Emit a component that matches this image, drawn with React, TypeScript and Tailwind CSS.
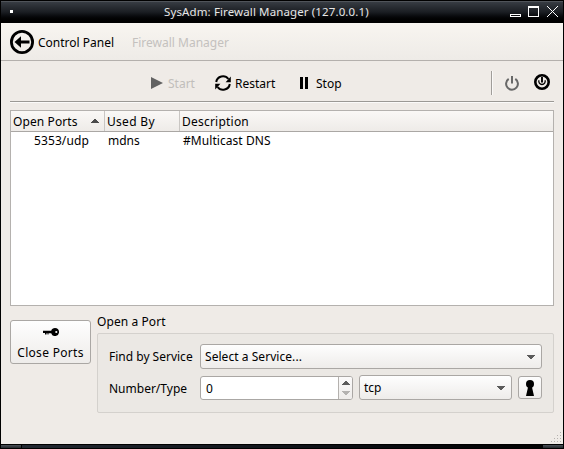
import type { ReactNode } from "react";

function DownArrow({ className = "" }: { className?: string }) {
  return (
    <svg className={className} width="8" height="4" viewBox="0 0 8 4" shapeRendering="crispEdges">
      <path d="M0 0h8v1H0zM1 1h6v1H1zM2 2h4v1H2zM3 3h2v1H3z" fill="currentColor" />
    </svg>
  );
}

function UpArrow({ className = "" }: { className?: string }) {
  return (
    <svg className={className} width="8" height="4" viewBox="0 0 8 4" shapeRendering="crispEdges">
      <path d="M0 3h8v1H0zM1 2h6v1H1zM2 1h4v1H2zM3 0h2v1H3z" fill="currentColor" />
    </svg>
  );
}

function TitleBar() {
  return (
    <div className="h-[23px] border-x border-t border-black bg-linear-to-b from-[#3a3f46] via-[#1b1e23] to-black">
      <div className="flex h-full w-full items-center border-t border-[#50545a] pr-[5px] pb-[2px] pl-[9px]">
        <div className="size-[3px] shrink-0 bg-white" />
        <div className="flex-1 pl-[151px] text-[11.5px] leading-[18px] tracking-[0.12px] whitespace-nowrap text-[#e6e6e6]">
          SysAdm: Firewall Manager (127.0.0.1)
        </div>
        <svg width="48" height="11" viewBox="0 0 48 11" shapeRendering="crispEdges" fill="none" stroke="#fff">
          <path d="M.5 8.5h10v2H.5z" />
          <path d="M18.5.5h10v10h-10zM18 1.5h11" />
          <path d="M37 0l11 11M48 0L37 11" />
        </svg>
      </div>
    </div>
  );
}

function NavBar() {
  return (
    <div className="flex h-[38px] items-center border-b border-[#b4b0ad] bg-linear-to-b from-[#f8f5f0] to-[#eeebe7] pl-[9px]">
      <svg width="24" height="24" viewBox="0 0 24 24" fill="none" stroke="#000">
        <circle cx="12" cy="12" r="10.6" strokeWidth="2.8" />
        <path d="M9 12h10.5" strokeWidth="3" />
        <path d="M4.5 12L11 6.2v11.6z" fill="#000" stroke="none" />
      </svg>
      <span className="mt-[2px] ml-1 w-[94px]">Control Panel</span>
      <span className="mt-[2px] text-[#c4c1be]">Firewall Manager</span>
    </div>
  );
}

function Tool({ icon, label, className = "" }: { icon: ReactNode; label: string; className?: string }) {
  return (
    <div className={`flex items-center ${className}`}>
      {icon}
      <span className="mt-[2px]">{label}</span>
    </div>
  );
}

function Toolbar() {
  return (
    <div className="mx-[9px] flex h-[41px] items-center border-b border-[#9b9995] pt-1 shadow-[0_1px_0_#fbfaf9]">
      <Tool
        className="ml-[141px] w-[64px] text-[#c1bebb]"
        label="Start"
        icon={
          <svg className="mr-[5px]" width="12" height="12" viewBox="0 0 12 12">
            <path d="M0 0l12 6-12 6z" fill="#626262" />
          </svg>
        }
      />
      <Tool
        className="w-[85px]"
        label="Restart"
        icon={
          <svg className="mr-[4px]" width="16" height="16" viewBox="0 0 16 16" fill="none" stroke="#000" strokeWidth="2">
            <path d="M1.2 7A6.8 6.8 0 0 1 13.4 4M14.8 9A6.8 6.8 0 0 1 2.6 12" />
            <path d="M15.8 1.6v5.6h-5.2zM.2 14.4V8.8h5.2z" fill="#000" stroke="none" />
          </svg>
        }
      />
      <Tool
        label="Stop"
        icon={
          <svg className="mr-[8px]" width="8" height="12" viewBox="0 0 8 12">
            <path d="M0 0h3v12H0zM5 0h3v12H5z" />
          </svg>
        }
      />
      <div className="ml-auto h-6 w-[2px] border-l border-[#a09d9a] bg-[#faf9f8]" />
      <svg className="ml-3" width="14" height="15" viewBox="0 0 14 15" fill="none" stroke="#686868" strokeWidth="2">
        <path d="M3.7 2.9a5.9 5.9 0 1 0 6.6 0M7 0v7.5" />
      </svg>
      <svg className="mr-[4px] mb-[2px] ml-[15px]" width="16" height="16" viewBox="0 0 16 16" fill="none" stroke="#000">
        <circle cx="8" cy="8" r="6.7" strokeWidth="2.6" />
        <path d="M8 3v5.4" strokeWidth="1.9" />
        <path d="M5 6.2a3.2 3.2 0 1 0 6 0" strokeWidth="1.3" />
      </svg>
    </div>
  );
}

function PortsTable() {
  return (
    <div className="mx-[9px] mt-[8px] flex h-[196px] flex-col border border-[#b4b1ae] bg-white">
      <div className="flex h-[21px] items-center border-b border-[#aaa7a4] bg-linear-to-b from-[#faf8f6] to-[#eeebe8]">
        <div className="flex h-full w-[94px] items-center justify-between border-r border-[#c9c6c3] pr-[5px] pl-[2px]">
          <span className="mt-px tracking-[0.1px]">Open Ports</span>
          <UpArrow className="text-[#4b4b4b]" />
        </div>
        <div className="flex h-full w-[75px] items-center border-r border-[#c9c6c3] pt-px pl-[2px] tracking-[0.3px]">
          Used By
        </div>
        <div className="pt-px pl-[2px] tracking-[0.22px]">Description</div>
      </div>
      <div className="flex h-[18px] items-center">
        <div className="w-[94px] pr-[16px] text-right tracking-[0.12px]">5353/udp</div>
        <div className="w-[75px] pl-[3px]">mdns</div>
        <div className="pl-[3px] tracking-[0.06px]">#Multicast DNS</div>
      </div>
    </div>
  );
}

const control = "rounded-[3px] border border-[#aaa7a4] bg-linear-to-b from-[#fefefe] to-[#eeecea]";

function OpenPort() {
  return (
    <div className="ml-[6px] flex flex-col">
      <div className="flex h-5 items-start pt-px tracking-[0.08px]">Open a Port</div>
      <div className="flex h-[80px] w-[457px] flex-col rounded-[2px] border border-[#d4d1cd] bg-[#ebe8e4] pt-[10px] pl-[11px]">
        <div className="flex h-[25px]">
          <span className="flex w-[91px] items-center">Find by Service</span>
          <div className={`flex w-[342px] items-center justify-between pr-[6px] pl-[4px] ${control}`}>
            <span className="tracking-[0.05px]">Select a Service...</span>
            <DownArrow className="text-[#5b5b5b]" />
          </div>
        </div>
        <div className="mt-[6px] flex h-[25px] items-center">
          <span className="w-[91px] pt-[2px]">Number/Type</span>
          <div className="mt-px flex h-6 w-[153px] rounded-[3px] border border-[#aaa7a4] bg-white">
            <span className="flex flex-1 items-center pt-[2px] pl-[5px]">0</span>
            <div className="flex w-[14px] flex-col items-center justify-between rounded-r-[2px] border-l border-[#b4b1ae] bg-linear-to-b from-[#fbfafa] to-[#eeecea] py-1">
              <UpArrow className="text-[#5b5b5b]" />
              <DownArrow className="text-[#b4b2b0]" />
            </div>
          </div>
          <div className={`ml-[6px] flex h-[25px] w-[153px] items-center justify-between pr-[6px] pl-[4px] ${control}`}>
            <span className="pt-px">tcp</span>
            <DownArrow className="text-[#5b5b5b]" />
          </div>
          <div className={`ml-[6px] flex h-[23px] w-6 items-center justify-center ${control}`}>
            <svg width="8" height="16" viewBox="0 0 8 16">
              <circle cx="4" cy="4" r="4" />
              <path d="M2.3 6h3.4L8 16H0z" />
            </svg>
          </div>
        </div>
      </div>
    </div>
  );
}

function SizeGrip() {
  return (
    <svg width="10" height="10" viewBox="0 0 10 10" shapeRendering="crispEdges" fill="#b5b2af">
      <path d="M9 0h1v1H9zM9 3h1v1H9zM6 3h1v1H6zM9 6h1v1H9zM6 6h1v1H6zM3 6h1v1H3zM9 9h1v1H9zM6 9h1v1H6zM3 9h1v1H3zM0 9h1v1H0z" />
    </svg>
  );
}

export default function App() {
  return (
    <div className="flex h-[449px] w-[564px] flex-col overflow-hidden bg-black font-['Noto_Sans',sans-serif] text-[12px] leading-4 whitespace-nowrap text-black">
      <TitleBar />
      <div className="mx-px flex h-[421px] flex-col bg-[#efebe7]">
        <NavBar />
        <Toolbar />
        <PortsTable />
        <div className="mt-[7px] ml-[9px] flex h-[101px]">
          <button className={`mt-[7px] flex h-11 w-[81px] flex-col items-center pt-[7px] ${control}`}>
            <svg width="16" height="8" viewBox="0 0 16 8">
              <path
                fillRule="evenodd"
                d="M12 0a4 4 0 1 1-3.8 5.2H5.5v1.3h-1V5.2h-1v1.3H2V5H0V2.8h8.2A4 4 0 0 1 12 0zm1.3 2.9a1.1 1.1 0 1 0 0 2.2 1.1 1.1 0 0 0 0-2.2z"
              />
            </svg>
            <span className="mt-[9px] tracking-[0.3px]">Close Ports</span>
          </button>
          <OpenPort />
        </div>
        <div className="flex flex-1 items-end justify-end pr-[2px] pb-[2px]">
          <SizeGrip />
        </div>
      </div>
      <div className="mt-px flex h-[3px] justify-between px-px">
        <div className="w-5 bg-linear-to-b from-[#4b5157] to-[#24282d]" />
        <div className="ml-px flex-1 bg-linear-to-r from-[#222831] via-[#11141a] to-[#020203]" />
        <div className="w-5 bg-linear-to-b from-[#4b5157] to-[#24282d]" />
      </div>
    </div>
  );
}
